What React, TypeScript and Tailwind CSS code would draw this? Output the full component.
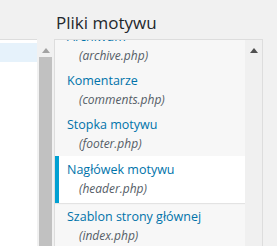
const files = [
  { name: "Archiwum", file: "archive.php" },
  { name: "Komentarze", file: "comments.php" },
  { name: "Stopka motywu", file: "footer.php" },
  { name: "Nagłówek motywu", file: "header.php", active: true },
  { name: "Szablon strony głównej", file: "index.php" },
]

function UpArrow({ color }: { color: string }) {
  return (
    <svg width="8" height="5" viewBox="0 0 8 5">
      <path d="M0 5 L4 0 L8 5 Z" fill={color} />
    </svg>
  )
}

export default function App() {
  return (
    <div className="w-[277px] h-[246px] bg-[#f1f1f1] overflow-hidden font-['Open_Sans',sans-serif]">
      {/* Heading */}
      <div className="h-[39px] pt-[13px] pl-[56px]">
        <h2 className="text-[17px] leading-[20px] text-[#23282d]">Pliki motywu</h2>
      </div>

      <div className="flex h-[207px]">
        {/* Code editor edge */}
        <div className="w-[37px] bg-white border-t border-[#dddddd]">
          <div className="mt-[3px] h-[19px] bg-[#e6f2fb]" />
        </div>

        {/* Editor scrollbar */}
        <div className="w-[17px] flex flex-col bg-[#f1f1f1]">
          <div className="h-[18px] flex items-end justify-center pb-[4px]">
            <UpArrow color="#a3a3a3" />
          </div>
          <div className="flex-1 mx-[2px] bg-[#c1c1c1]" />
        </div>

        {/* File list */}
        <div className="w-[209px] flex border border-b-0 border-[#dddddd] bg-[#f7f7f7]">
          <div className="w-[190px] overflow-hidden">
            <ul className="-mt-[17px]">
              {files.map((f) =>
                f.active ? (
                  <li
                    key={f.file}
                    className="mt-[1px] pt-[5px] pb-[4px] pl-[8px] bg-white border-l-4 border-[#00a0d2] shadow-[0_1px_1px_rgba(0,0,0,0.08)]"
                  >
                    <div className="text-[12.5px] leading-[18px] text-[#0073aa] whitespace-nowrap">{f.name}</div>
                    <div className="pl-[12px] text-[12px] leading-[20px] italic text-[#555d66] whitespace-nowrap">
                      ({f.file})
                    </div>
                  </li>
                ) : (
                  <li key={f.file} className="pt-[5px] pb-[1px] pl-[12px]">
                    <div className="text-[12.5px] leading-[18px] text-[#0073aa] whitespace-nowrap">{f.name}</div>
                    <div className="pl-[12px] text-[12px] leading-[20px] italic text-[#555d66] whitespace-nowrap">
                      ({f.file})
                    </div>
                  </li>
                )
              )}
            </ul>
          </div>
          <div className="w-[17px] bg-[#f0f0f0] flex justify-center pt-[8px]">
            <UpArrow color="#505050" />
          </div>
        </div>
      </div>
    </div>
  )
}
